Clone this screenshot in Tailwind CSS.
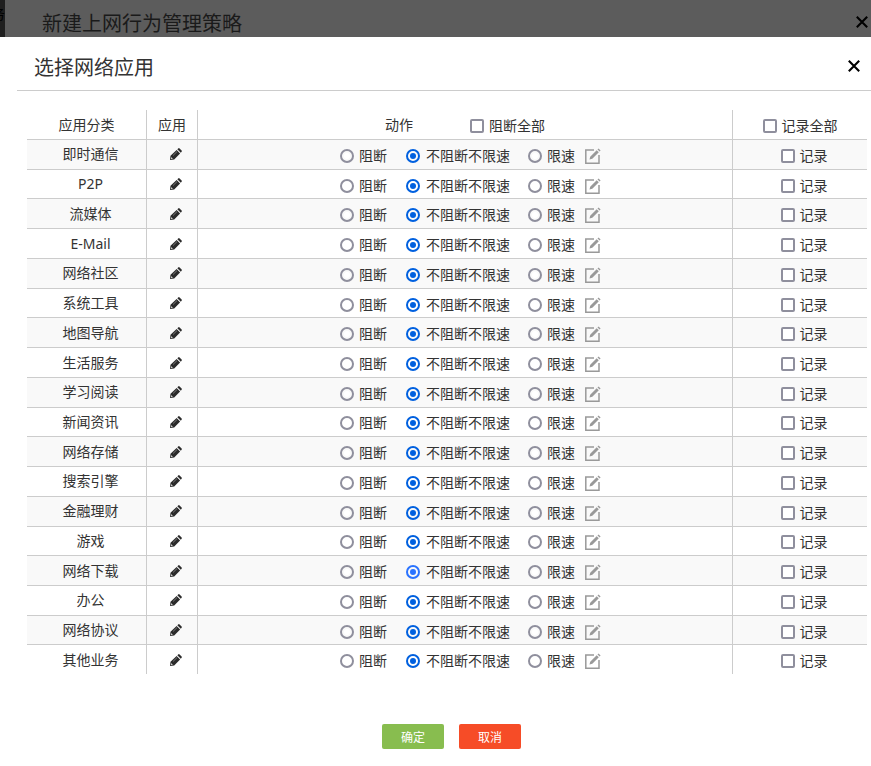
<!DOCTYPE html>
<html lang="zh-CN">
<head>
    <meta charset="UTF-8">
    <meta name="viewport" content="width=device-width, initial-scale=1.0">
    <title>选择网络应用</title>
    <script src="https://cdn.jsdelivr.net/npm/@tailwindcss/browser@4"></script>
</head>
<body class="min-h-screen bg-white font-['Noto_Sans','Noto_Sans_CJK_SC',sans-serif] text-sm text-[#333]">

    <!-- 被遮罩的下层弹窗 -->
    <div class="flex h-[37px] overflow-hidden bg-[#5c5c5c] text-[#1a1a1a]">
        <div class="flex w-[5px] shrink-0 justify-end overflow-hidden bg-[#1f1f1f] pt-1 text-sm text-black"><span>务</span></div>
        <h2 class="flex-1 pt-2.5 pl-[37px] text-xl leading-7">新建上网行为管理策略</h2>
        <button type="button" aria-label="关闭" class="mt-4 mr-[3px] h-3 w-3 text-black">
            <svg class="h-3 w-3" viewBox="0 0 12 12" fill="none" stroke="currentColor" stroke-width="2.1"><path d="M.8.8l10.4 10.4M11.2.8L.8 11.2"/></svg>
        </button>
    </div>

    <!-- 选择网络应用 -->
    <form id="app-dialog">
        <div class="ml-[17px] flex h-[54px] items-start border-b border-[#ccc]">
            <h1 class="flex-1 pt-[17px] pl-[17px] text-xl leading-7">选择网络应用</h1>
            <button type="button" aria-label="关闭" class="mt-[23px] mr-[11px] h-3 w-3 text-black">
                <svg class="h-3 w-3" viewBox="0 0 12 12" fill="none" stroke="currentColor" stroke-width="2.1"><path d="M.8.8l10.4 10.4M11.2.8L.8 11.2"/></svg>
            </button>
        </div>

        <div class="mt-[19px] mr-1 ml-[27px]">
            <table class="h-[564px] w-full table-fixed border-separate border-spacing-0 text-center leading-5">
                <thead>
                    <tr class="h-[30px]">
                        <th class="w-[120px] border-r border-b border-[#ccc] font-normal">应用分类</th>
                        <th class="w-[51px] border-r border-b border-[#ccc] font-normal">应用</th>
                        <th class="border-r border-b border-[#ccc] font-normal">
                            <div class="flex items-center justify-center">
                                <span class="mr-[57px]">动作</span>
                                <label class="flex items-center gap-[5px] pt-[3px]">
                                    <input type="checkbox" id="block-all" class="h-3.5 w-3.5 appearance-none rounded-xs border-2 border-[#8f8f9d] bg-white checked:bg-[#0060df]">阻断全部
                                </label>
                            </div>
                        </th>
                        <th class="w-[134px] border-b border-[#ccc] font-normal">
                            <label class="flex items-center justify-center gap-[5px] pt-[3px]">
                                <input type="checkbox" id="log-all" class="h-3.5 w-3.5 appearance-none rounded-xs border-2 border-[#8f8f9d] bg-white checked:bg-[#0060df]">记录全部
                            </label>
                        </th>
                    </tr>
                </thead>
                <tbody id="app-list"></tbody>
            </table>
        </div>

        <div class="mt-[50px] flex justify-center gap-[15px] pl-8 text-xs text-white">
            <button type="submit" class="h-[25px] w-[62px] rounded-xs bg-[#88bd4f] pt-0.5">确定</button>
            <button type="button" class="h-[25px] w-[62px] rounded-xs bg-[#f64c27] pt-0.5">取消</button>
        </div>
    </form>

    <script>
        const categories = [
            '即时通信', 'P2P', '流媒体', 'E-Mail', '网络社区', '系统工具',
            '地图导航', '生活服务', '学习阅读', '新闻资讯', '网络存储', '搜索引擎',
            '金融理财', '游戏', '网络下载', '办公', '网络协议', '其他业务'
        ];

        const radioClass = 'h-3.5 w-3.5 appearance-none rounded-full border-2 border-[#8f8f9d] bg-white bg-clip-content p-0.5 checked:border-[#0060df] checked:bg-[#0060df] hover:checked:border-[#2a73ff] hover:checked:bg-[#2a73ff]';
        const activeRadioClass = 'h-3.5 w-3.5 appearance-none rounded-full border-2 border-[#8f8f9d] bg-white bg-clip-content p-0.5 checked:border-[#2a73ff] checked:bg-[#2a73ff]';

        // 生成每个应用分类的一行
        document.getElementById('app-list').innerHTML = categories.map((name, i) => `
            <tr class="group odd:bg-[#f9f9f9]">
                <td class="border-r border-b border-[#ccc] pl-2 group-last:border-b-0">${name}</td>
                <td class="border-r border-b border-[#ccc] pl-2 group-last:border-b-0">
                    <button type="button" aria-label="选择应用" class="mx-auto block h-3 w-3">
                        <svg class="h-3 w-3" viewBox="0 0 12 12" fill="#2b2b2b"><path d="M0 12l.5-4.2L6.6 1.9l3.5 3.5L4.2 11.5zM7.3 1.2L8.2.4q.7-.6 1.4 0l2 2q.6.7 0 1.4l-.8.9z"/><path d="M1.2 9.2l1.6 1.6-1.1.3-.8-.8z" fill="#fff"/><path d="M3 7.5l4-3.9" stroke="#aaa" stroke-width=".6"/></svg>
                    </button>
                </td>
                <td class="border-r border-b border-[#ccc] pl-[11px] group-last:border-b-0">
                    <div class="flex items-center justify-center pt-[3px]">
                        <label class="mr-[19px] flex items-center gap-[5px]"><input type="radio" name="action${i}" value="block" class="${radioClass}">阻断</label>
                        <label class="mr-[18px] flex items-center gap-[6px]"><input type="radio" name="action${i}" value="pass" checked class="${i === 14 ? activeRadioClass : radioClass}">不阻断不限速</label>
                        <label class="mr-[10px] flex items-center gap-[5px]"><input type="radio" name="action${i}" value="limit" class="${radioClass}">限速</label>
                        <button type="button" aria-label="编辑限速" class="h-4 w-4">
                            <svg class="h-4 w-4" viewBox="0 0 16 16" fill="none" stroke="#999" stroke-width="1.5"><path d="M9 2H.8v13.2H14V7"/><path d="M4.5 11.5l.7-2.8 6.5-6.5 2.1 2.1-6.5 6.5zM12.5 1.4l1-1 2.1 2.1-1 1z" fill="#999" stroke="none"/></svg>
                        </button>
                    </div>
                </td>
                <td class="border-b border-[#ccc] pl-2 group-last:border-b-0">
                    <label class="flex items-center justify-center gap-[5px] pt-[3px]">
                        <input type="checkbox" name="log${i}" class="log-item h-3.5 w-3.5 appearance-none rounded-xs border-2 border-[#8f8f9d] bg-white checked:bg-[#0060df]">记录
                    </label>
                </td>
            </tr>`).join('');

        // 阻断全部
        document.getElementById('block-all').addEventListener('change', e => {
            const value = e.target.checked ? 'block' : 'pass';
            document.querySelectorAll(`input[value="${value}"]`).forEach(el => el.checked = true);
        });

        // 记录全部
        document.getElementById('log-all').addEventListener('change', e => {
            document.querySelectorAll('.log-item').forEach(el => el.checked = e.target.checked);
        });

        document.getElementById('app-dialog').addEventListener('submit', e => e.preventDefault());
    </script>
</body>
</html>
